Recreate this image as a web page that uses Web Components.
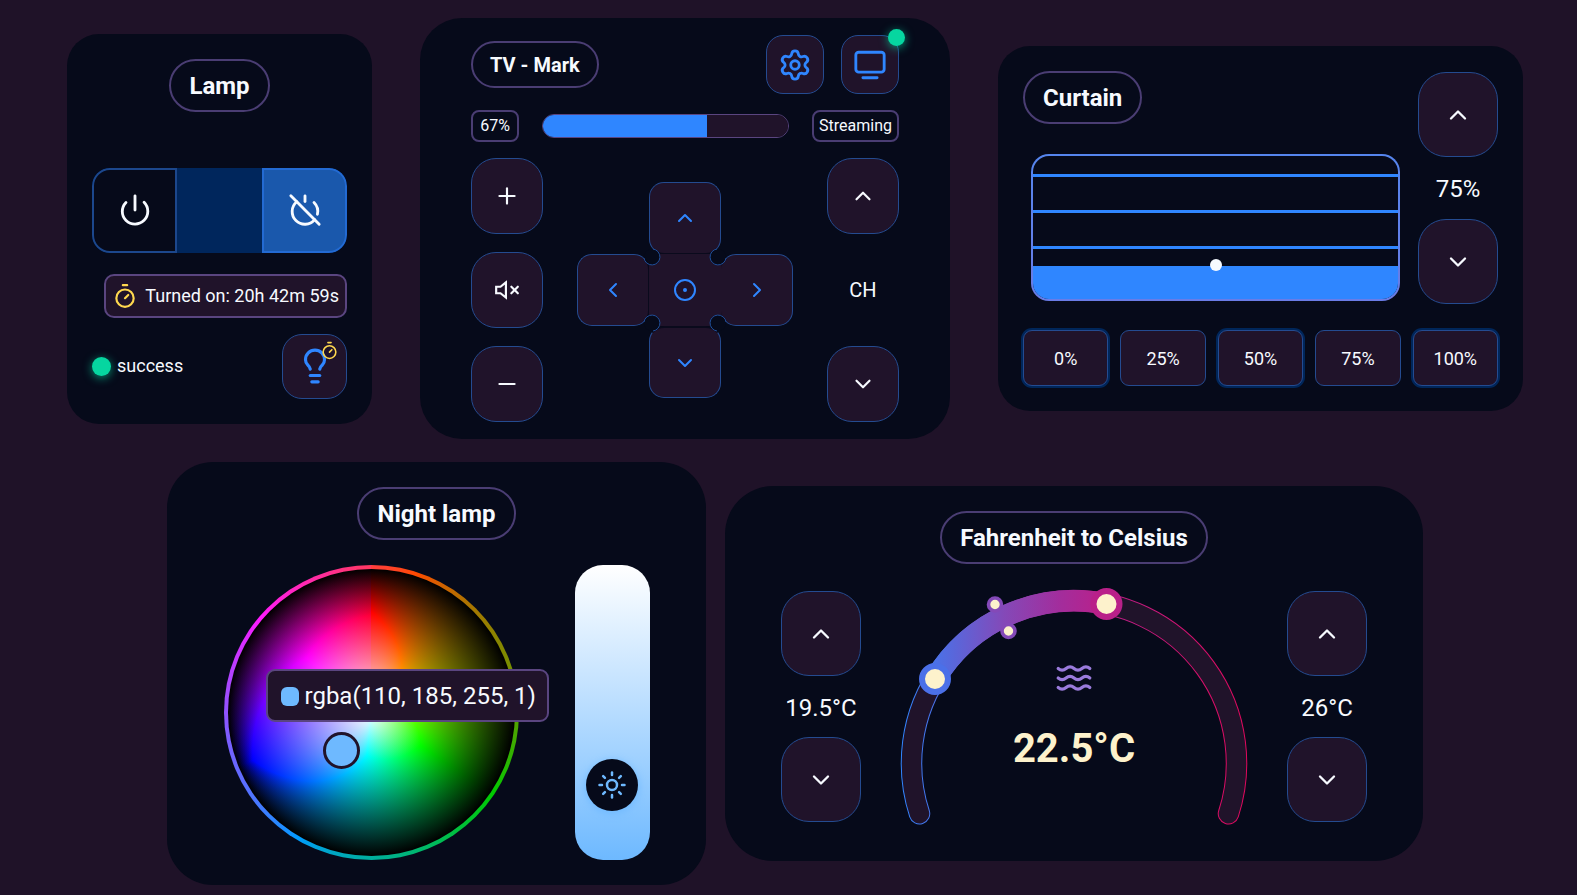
<!DOCTYPE html>
<html lang="en">
<head>
<meta charset="utf-8">
<title>Smart home</title>
<style>
  body { margin: 0; background: #1f1228; }
</style>
</head>
<body>
<home-dashboard></home-dashboard>
<script>
const ICONS = {
  power: '<path d="M12 2v10"/><path d="M18.4 6.6a9 9 0 1 1-12.77.04"/>',
  powerOff: '<path d="M18.36 6.64A9 9 0 0 1 20.77 15"/><path d="M6.16 6.16a9 9 0 1 0 12.68 12.68"/><path d="M12 2v4"/><path d="m2 2 20 20"/>',
  timer: '<path d="M10 2h4"/><path d="m12 14 3-3"/><circle cx="12" cy="14" r="8"/>',
  bulb: '<path d="M15 14c.2-1 .7-1.7 1.5-2.5 1-.9 1.5-2.2 1.5-3.5A6 6 0 0 0 6 8c0 1 .2 2.2 1.5 3.5.7.7 1.3 1.5 1.5 2.5"/><path d="M9 18h6"/><path d="M10 22h4"/>',
  settings: '<path d="M9.671 4.136a2.34 2.34 0 0 1 4.659 0 2.34 2.34 0 0 0 3.319 1.915 2.34 2.34 0 0 1 2.33 4.033 2.34 2.34 0 0 0 0 3.831 2.34 2.34 0 0 1-2.33 4.033 2.34 2.34 0 0 0-3.319 1.915 2.34 2.34 0 0 1-4.659 0 2.34 2.34 0 0 0-3.32-1.915 2.34 2.34 0 0 1-2.33-4.033 2.34 2.34 0 0 0 0-3.831A2.34 2.34 0 0 1 6.35 6.051a2.34 2.34 0 0 0 3.319-1.915"/><circle cx="12" cy="12" r="3"/>',
  tv: '<path d="M7 21h10"/><rect width="20" height="14" x="2" y="3" rx="2"/>',
  plus: '<path d="M5 12h14"/><path d="M12 5v14"/>',
  minus: '<path d="M5 12h14"/>',
  mute: '<g stroke-linecap="butt" stroke-linejoin="miter"><path d="M11 5 6 9H2v6h4l5 4z"/></g><path d="m22 9-6 6"/><path d="m16 9 6 6"/>',
  up: '<path d="m18 15-6-6-6 6"/>',
  down: '<path d="m6 9 6 6 6-6"/>',
  left: '<path d="m15 18-6-6 6-6"/>',
  right: '<path d="m9 18 6-6-6-6"/>',
  target: '<circle cx="12" cy="12" r="10"/><circle cx="12" cy="12" r="1"/>',
  sun: '<circle cx="12" cy="12" r="4"/><path d="M12 2v2"/><path d="M12 20v2"/><path d="m4.93 4.93 1.41 1.41"/><path d="m17.66 17.66 1.41 1.41"/><path d="M2 12h2"/><path d="M20 12h2"/><path d="m6.34 17.66-1.41 1.41"/><path d="m19.07 4.93-1.41 1.41"/>',
  waves: '<path d="M2 6c.6.5 1.2 1 2.5 1C7 7 7 5 9.5 5c2.6 0 2.4 2 5 2 2.5 0 2.5-2 5-2 1.3 0 1.9.5 2.5 1"/><path d="M2 12c.6.5 1.2 1 2.5 1 2.5 0 2.5-2 5-2 2.6 0 2.4 2 5 2 2.5 0 2.5-2 5-2 1.3 0 1.9.5 2.5 1"/><path d="M2 18c.6.5 1.2 1 2.5 1 2.5 0 2.5-2 5-2 2.6 0 2.4 2 5 2 2.5 0 2.5-2 5-2 1.3 0 1.9.5 2.5 1"/>'
};

const BASE = '*{box-sizing:border-box}[hidden]{display:none}';

function element(name, css, html) {
  customElements.define(name, class extends HTMLElement {
    connectedCallback() {
      if (this.shadowRoot) return;
      const root = this.attachShadow({ mode: 'open' });
      root.innerHTML = `<style>${BASE}${css}</style>` + (typeof html === 'function' ? html(this) : html);
    }
  });
}

element('ui-icon', `
  :host { display: inline-flex; flex: none; }
  svg { display: block; fill: none; stroke: currentColor; stroke-width: 2; stroke-linecap: round; stroke-linejoin: round; }
`, el => {
  const s = el.getAttribute('size') || 24;
  return `<svg width="${s}" height="${s}" viewBox="0 0 24 24" aria-hidden="true">${ICONS[el.getAttribute('name')]}</svg>`;
});

element('title-pill', `
  :host { display: inline-flex; flex: none; height: 53px; padding: 2px 18px 0; align-items: center;
    border: 2px solid #4a3d73; border-radius: 27px; box-sizing: border-box; font-size: 24px; }
  :host([small]) { height: 47px; padding: 0 17px; font-size: 20px; }
  h2 { margin: 0; font-size: inherit; font-weight: 700; white-space: nowrap; }
`, '<h2><slot></slot></h2>');

element('pad-button', `
  :host { display: block; flex: none; position: relative; width: 80px; height: 85px; }
  button { display: flex; align-items: center; justify-content: center; width: 100%; height: 100%; margin: 0; padding: 0;
    font: inherit; color: inherit; background: #20132a; border: 1px solid #244b90; border-radius: var(--pad-radius, 28px);
    cursor: pointer; }
`, el => `<button type="button" aria-label="${el.getAttribute('label')}"><ui-icon name="${el.getAttribute('icon')}" size="${el.getAttribute('size') || 28}"></ui-icon></button><slot></slot>`);

element('status-dot', `
  :host { display: block; width: 19px; height: 19px; border-radius: 50%; background: #06d6a0; box-shadow: 0 2px 10px #06d6a0aa; }
`, '');

element('device-card', `
  :host { display: block; flex: none; box-sizing: border-box; max-width: 100%; background: #060a1a; border-radius: 32px; padding: 25px; }
`, '<slot></slot>');

element('step-control', `
  :host { display: flex; flex-direction: column; align-items: center; justify-content: space-between; height: 232px; width: 80px; flex: none; }
  output { padding-top: 2px; font-size: 24px; line-height: 32px; white-space: nowrap; }
`, el => `<pad-button icon="up" label="Increase"></pad-button><output><slot></slot></output><pad-button icon="down" label="Decrease"></pad-button>`);

element('lamp-card', `
  :host { display: block; flex: none; width: 305px; }
  .stack { display: flex; flex-direction: column; align-items: center; }
  .switch { display: grid; grid-template-columns: repeat(3, 1fr); width: 100%; height: 85px; margin-top: 56px;
    background: #00265c; border-radius: 18px; overflow: hidden; }
  .switch button { display: grid; place-items: center; padding: 0; color: inherit; background: #060a1a; border: 2px solid #1c478c;
    border-radius: 18px 0 0 18px; }
  .switch button.on { grid-column: 3; background: #1a58ac; border-color: #236ad2; border-radius: 0 18px 18px 0; }
  .time { display: flex; align-items: center; gap: 7px; align-self: flex-end; height: 44px; margin-top: 21px; padding: 0 6px;
    background: #20132a; border: 2px solid #5a4580; border-radius: 10px; font-size: 18px; white-space: nowrap; }
  .yellow { color: #ffd84f; }
  .foot { display: flex; align-items: center; justify-content: space-between; width: 100%; margin-top: 16px; font-size: 18px; }
  .status { display: flex; align-items: center; gap: 6px; }
  .bulb { width: 65px; height: 65px; color: #2f86ff; --pad-radius: 20px; }
  .bulb .yellow { position: absolute; left: 38px; top: 7px; }
`, `<device-card><div class="stack">
  <title-pill>Lamp</title-pill>
  <div class="switch" role="group" aria-label="Lamp power">
    <button type="button" aria-label="Turn on"><ui-icon name="power" size="34"></ui-icon></button>
    <button type="button" class="on" aria-label="Turn off" aria-pressed="true"><ui-icon name="powerOff" size="34"></ui-icon></button>
  </div>
  <div class="time"><ui-icon class="yellow" name="timer" size="26"></ui-icon><span>Turned on: 20h 42m 59s</span></div>
  <div class="foot">
    <div class="status"><status-dot></status-dot><span>success</span></div>
    <pad-button class="bulb" icon="bulb" size="38" label="Lamp timer"><ui-icon class="yellow" name="timer" size="19"></ui-icon></pad-button>
  </div>
</div></device-card>`);

element('direction-pad', `
  :host { display: grid; grid-template-columns: repeat(3, 72px); grid-template-rows: repeat(3, 72px); position: relative; color: #2f86ff; }
  button { display: grid; place-items: center; padding: 0; color: inherit; background: #20132a; border: 1px solid #244b90; border-radius: 15px; }
  .up { grid-area: 1 / 2; border-bottom-color: #0a0a1c; }
  .left { grid-area: 2 / 1; border-right-color: #0a0a1c; }
  .ok { grid-area: 2 / 2; border-color: #20132a; border-radius: 0; }
  .right { grid-area: 2 / 3; border-left-color: #20132a; }
  .down { grid-area: 3 / 2; border-top: 2px solid #0a0a1c; }
  .notches { position: absolute; inset: 0; pointer-events: none; }
`, () => {
  const notch = t => `<g transform="${t}"><circle cx="75" cy="75" r="8" fill="#060a1a"/><path d="M67 76 A8 8 0 1 0 76 67" fill="none" stroke="#1f4f9a"/></g>`;
  return `<button type="button" class="up" aria-label="Up"><ui-icon name="up"></ui-icon></button>
  <button type="button" class="left" aria-label="Left"><ui-icon name="left"></ui-icon></button>
  <button type="button" class="ok" aria-label="Select"><ui-icon name="target"></ui-icon></button>
  <button type="button" class="right" aria-label="Right"><ui-icon name="right"></ui-icon></button>
  <button type="button" class="down" aria-label="Down"><ui-icon name="down"></ui-icon></button>
  <svg class="notches" width="216" height="216" viewBox="0 0 216 216" aria-hidden="true">
    ${notch('')}${notch('matrix(-1 0 0 1 216 0)')}${notch('matrix(1 0 0 -1 0 216)')}${notch('matrix(-1 0 0 -1 216 216)')}
  </svg>`;
});

element('tv-card', `
  :host { display: block; flex: none; width: 530px; }
  device-card { padding: 17px 51px; border-radius: 42px; }
  .stack { display: flex; flex-direction: column; gap: 16px; }
  .row { display: flex; align-items: center; justify-content: space-between; }
  .tools { display: flex; gap: 17px; color: #2f86ff; }
  .tools pad-button { width: 58px; height: 59px; --pad-radius: 17px; }
  status-dot { position: absolute; right: -6px; top: -6px; width: 17px; height: 17px; }
  .tag { display: flex; align-items: center; justify-content: center; min-width: 48px; height: 32px; padding: 0 5px; border: 2px solid #4a3d73; border-radius: 8px; font-size: 16px; white-space: nowrap; }
  progress { appearance: none; width: 247px; height: 24px; border: 1px solid #5a4580; border-radius: 12px; background: #20132a; overflow: hidden; }
  progress::-webkit-progress-bar { background: #20132a; }
  progress::-webkit-progress-value { background: #2f86ff; }
  .controls { display: flex; justify-content: space-between; align-items: center; }
  .col { display: flex; flex-direction: column; align-items: center; justify-content: space-between; height: 264px; font-size: 20px; }
  .col pad-button { width: 72px; height: 76px; --pad-radius: 25px; }
`, `<device-card><div class="stack">
  <div class="row"><title-pill small>TV - Mark</title-pill>
    <div class="tools">
      <pad-button icon="settings" size="34" label="Settings"></pad-button>
      <pad-button icon="tv" size="34" label="TV power"><status-dot></status-dot></pad-button>
    </div></div>
  <div class="row"><label class="tag" for="volume">67%</label><progress id="volume" max="100" value="67"></progress><span class="tag">Streaming</span></div>
  <div class="controls">
    <div class="col"><pad-button icon="plus" size="26" label="Volume up"></pad-button><pad-button icon="mute" size="26" label="Mute"></pad-button><pad-button icon="minus" size="26" label="Volume down"></pad-button></div>
    <direction-pad></direction-pad>
    <div class="col"><pad-button icon="up" size="26" label="Channel up"></pad-button><span>CH</span><pad-button icon="down" size="26" label="Channel down"></pad-button></div>
  </div>
</div></device-card>`);

element('curtain-window', `
  :host { display: block; position: relative; height: 147px; }
  .pane { height: 100%; border: 2px solid transparent; border-radius: 18px;
    background: linear-gradient(to bottom, transparent 18px, #2f86ff 18px 21px, transparent 21px 54px, #2f86ff 54px 57px, transparent 57px 90px, #2f86ff 90px 93px, transparent 93px 110px, #2f86ff 110px) padding-box,
      linear-gradient(#060a1a, #060a1a) padding-box,
      linear-gradient(#5585ee, #6a7ce6) border-box; }
  input { appearance: none; position: absolute; inset: 2px 0 -4px; width: 100%; height: auto; margin: 0; writing-mode: vertical-lr; background: none; }
  input::-webkit-slider-thumb { appearance: none; width: 12px; height: 12px; border-radius: 50%; background: #f7faff; }
`, '<div class="pane"></div><input type="range" min="0" max="100" value="75" aria-label="Curtain position">');

element('curtain-card', `
  :host { display: block; flex: none; width: 525px; }
  .top { display: flex; align-items: flex-end; gap: 18px; height: 233px; }
  .main { display: flex; flex: 1; flex-direction: column; align-self: flex-start; align-items: flex-start; gap: 30px; }
  curtain-window { align-self: stretch; margin-left: 8px; }
  .presets { display: grid; grid-template-columns: repeat(5, 1fr); gap: 12px; margin-top: 26px; }
  .presets button { height: 56px; padding: 2px 0 0; font: inherit; font-size: 18px; color: inherit; background: #20132a; border: 1px solid #244b90; border-radius: 9px; }
  .presets button:nth-child(odd) { box-shadow: 0 0 0 2px #00265a; }
`, `<device-card>
  <div class="top">
    <div class="main"><title-pill>Curtain</title-pill><curtain-window></curtain-window></div>
    <step-control>75%</step-control>
  </div>
  <div class="presets"><button type="button">0%</button><button type="button">25%</button><button type="button">50%</button><button type="button">75%</button><button type="button">100%</button></div>
</device-card>`);

element('color-wheel', `
  :host { display: block; position: relative; flex: none; width: 295px; height: 295px;
    --hues: conic-gradient(#f00 0deg, #ff0 62deg, #0f0 124deg, #0ff 186deg, #00f 248deg, #f0f 310deg, #ff0034 360deg); }
  .ring, .disc { border-radius: 50%; background-blend-mode: luminosity, normal; }
  .ring { height: 100%; padding: 4px; background-image: linear-gradient(#787878, #787878), var(--hues); }
  .disc { height: 100%; background-image: radial-gradient(closest-side, #fff, #000), var(--hues); }
  .marker { position: absolute; left: 99px; top: 167px; width: 37px; height: 37px; border: 3px solid #20132a; border-radius: 50%; background: #6eb9ff; }
  .tip { position: absolute; left: 42px; top: 104px; display: flex; align-items: center; gap: 6px; height: 53px; padding: 2px 11px 0 13px;
    background: #20132a; border: 2px solid #5a4580; border-radius: 9px; font-size: 24px; white-space: nowrap; }
  .swatch { width: 18px; height: 19px; border-radius: 6px; background: #6eb9ff; }
`, '<div class="ring"><div class="disc"></div></div><div class="marker"></div><div class="tip"><span class="swatch"></span><span>rgba(110, 185, 255, 1)</span></div>');

element('brightness-slider', `
  :host { display: block; position: relative; flex: none; width: 75px; height: 295px; color: #6eb9ff; }
  input { appearance: none; display: block; width: 100%; height: 100%; margin: 0; writing-mode: vertical-lr; direction: rtl;
    border-radius: 28px; background: linear-gradient(#fff, #6eb9ff); }
  input::-webkit-slider-thumb { appearance: none; width: 52px; height: 52px; border-radius: 50%; background: #060a1a; box-shadow: 0 2px 8px #6eb9ff; }
  ui-icon { position: absolute; left: 22px; bottom: 60px; pointer-events: none; }
`, '<input type="range" min="0" max="100" value="20" aria-label="Brightness"><ui-icon name="sun" size="30"></ui-icon>');

element('night-card', `
  :host { display: block; flex: none; width: 539px; }
  device-card { border-radius: 46px; }
  .stack { display: flex; flex-direction: column; align-items: center; gap: 25px; }
  .body { display: flex; gap: 56px; }
`, `<device-card><div class="stack"><title-pill>Night lamp</title-pill>
  <div class="body"><color-wheel></color-wheel><brightness-slider></brightness-slider></div></div></device-card>`);

element('temperature-gauge', `
  :host { display: grid; flex: none; width: 350px; height: 232px; }
  svg, .reading { grid-area: 1 / 1; }
  svg { overflow: visible; }
  .reading { display: flex; flex-direction: column; align-items: center; gap: 28px; padding-top: 68px; }
  ui-icon { color: #9a7bdc; }
  strong { color: #fdf2cc; font-size: 40px; line-height: 48px; }
`, `<svg width="350" height="232" viewBox="0 0 350 232" fill="none" role="img" aria-label="Temperature range">
    <defs><linearGradient id="heat" gradientUnits="userSpaceOnUse" x1="0" y1="0" x2="350" y2="0">
      <stop offset="0" stop-color="#2f86ff"/><stop offset=".16" stop-color="#5a66da"/><stop offset=".3" stop-color="#8449b8"/><stop offset=".46" stop-color="#a32d9c"/><stop offset=".6" stop-color="#bc1f88"/><stop offset="1" stop-color="#e0085c"/>
    </linearGradient></defs>
    <path d="M20.500 222.700A162.500 162.500 0 1 1 329.500 222.700" stroke="url(#heat)" stroke-width="21.500" stroke-linecap="round"/>
    <path d="M20.500 222.700A162.500 162.500 0 1 1 329.500 222.700" stroke="#20132a" stroke-width="19.500" stroke-linecap="round"/>
    <path d="M36 88A162.500 162.500 0 0 1 207.500 13" stroke="url(#heat)" stroke-width="21.500"/>
    <g fill="#fdf2cc"><circle cx="96" cy="13.500" r="6.500" stroke="#8449b8" stroke-width="3.600"/><circle cx="109.500" cy="40" r="6.500" stroke="#8449b8" stroke-width="3.600"/>
    <circle cx="36" cy="88" r="13" stroke="#4b70e8" stroke-width="6"/><circle cx="207.500" cy="13" r="13" stroke="#b92089" stroke-width="6"/></g>
  </svg>
  <div class="reading"><ui-icon name="waves" size="38"></ui-icon><strong>22.5°C</strong></div>`);

element('temperature-card', `
  :host { display: block; flex: none; width: 698px; }
  device-card { border-radius: 48px; padding-bottom: 38px; }
  .stack { display: flex; flex-direction: column; align-items: center; gap: 27px; }
  .body { display: flex; justify-content: space-between; align-self: stretch; padding: 0 31px; }
  step-control { height: 231px; }
`, `<device-card><div class="stack"><title-pill>Fahrenheit to Celsius</title-pill>
  <div class="body"><step-control>19.5°C</step-control><temperature-gauge></temperature-gauge><step-control>26°C</step-control></div></div></device-card>`);

element('home-dashboard', `
  :host { display: block; font-family: Roboto, "Liberation Sans", sans-serif; line-height: 1.2; color: #f7faff; }
  main { display: flex; flex-direction: column; gap: 23px; padding: 18px 0 10px 13px; }
  section { display: flex; flex-wrap: wrap; align-items: center; justify-content: center; gap: 20px 48px; }
  .lower { column-gap: 19px; }
`, `<main><section><lamp-card></lamp-card><tv-card></tv-card><curtain-card></curtain-card></section>
  <section class="lower"><night-card></night-card><temperature-card></temperature-card></section></main>`);
</script>
</body>
</html>
